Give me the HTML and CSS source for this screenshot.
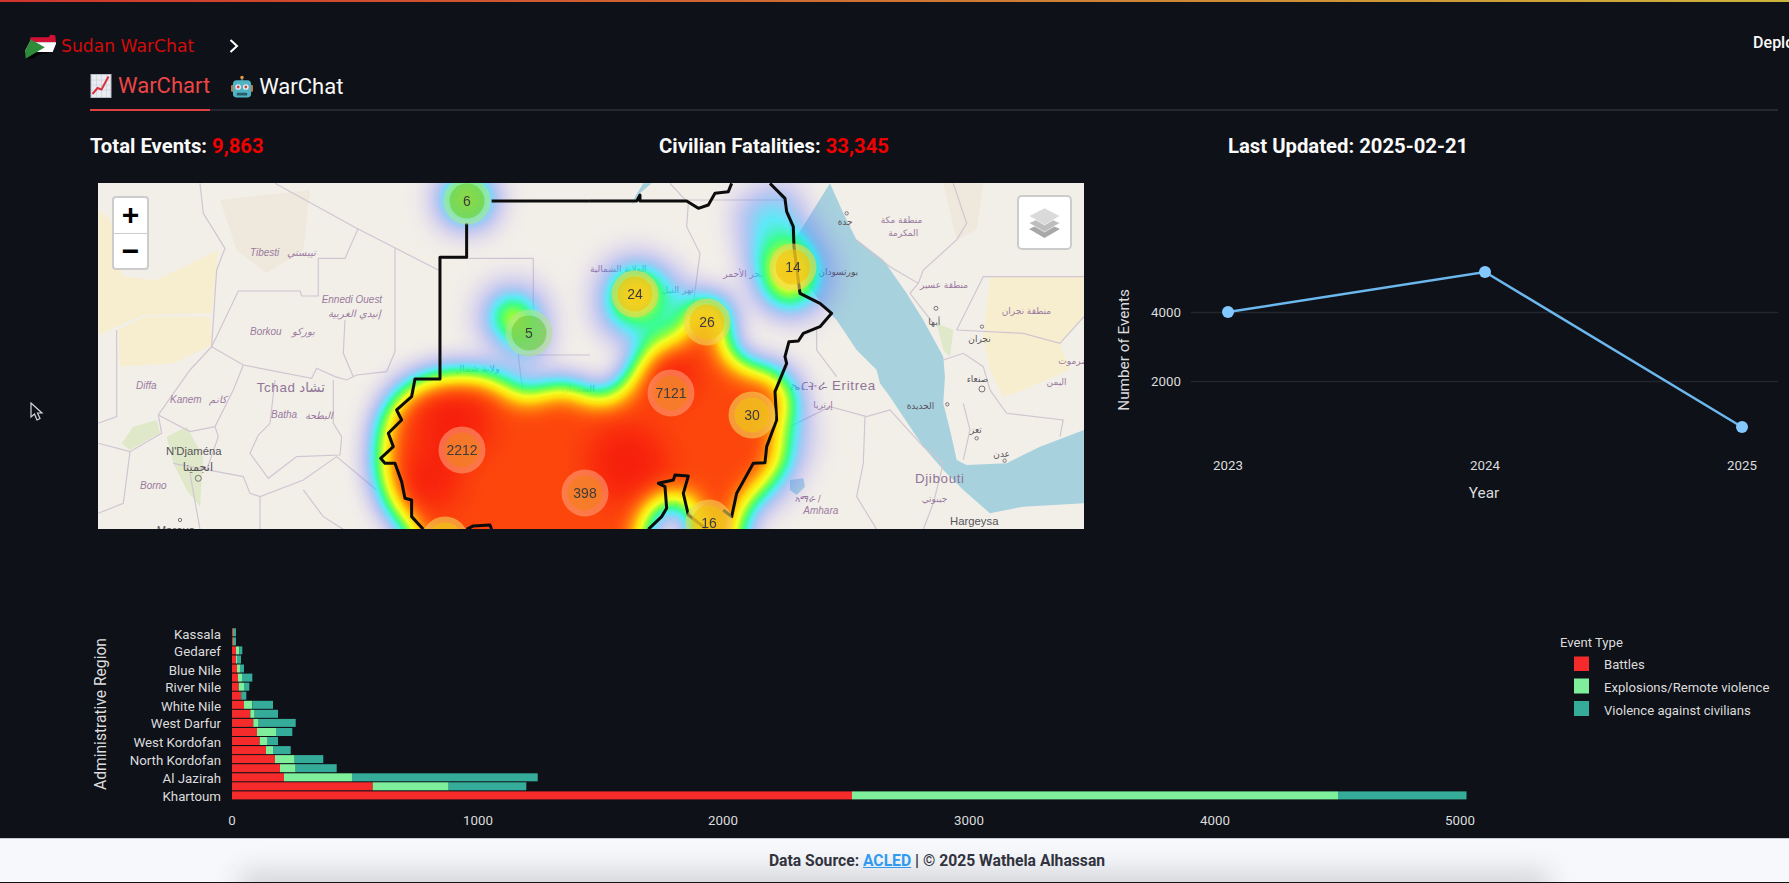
FILE: index.html
```html
<!DOCTYPE html>
<html lang="en">
<head>
    <meta charset="UTF-8">
    <title>Sudan WarChat</title>
    <link rel="stylesheet" href="styles.css">
</head>
<body>
    <div class="top-line"></div>

    <header class="header">
        <svg class="flag" viewBox="25 18 100 80">
            <clipPath id="sudan"><path d="M45 30 100 30 105 22 120 25 122 50 112 75 100 78 70 82 50 95 30 95 28 72 42 45Z"/></clipPath>
            <g clip-path="url(#sudan)">
                <rect x="25" y="18" width="100" height="27" fill="#d21034"/>
                <rect x="25" y="45" width="100" height="30" fill="#fff"/>
                <rect x="25" y="75" width="100" height="23" fill="#000"/>
                <path d="M25 25 88 60 25 98Z" fill="#2e8b3a"/>
            </g>
        </svg>
        <span class="brand">Sudan WarChat</span>
        <svg class="chevron" viewBox="0 0 12 16"><path d="M2.500 2 9 8 2.500 14" fill="none" stroke="#fff" stroke-width="2"/></svg>
        <span class="deploy">Deploy</span>
    </header>

    <main class="main">
        <nav class="tabs">
            <a class="tab active">
                <svg class="tab-icon" viewBox="0 0 21 24">
                    <rect x=".5" y=".5" width="20" height="23" fill="#e9ebf0" stroke="#b9bcc6"/>
                    <path d="M1 6H20M1 11H20M1 16H20M6 1V23M11 1V23M16 1V23" stroke="#c9ccd6" stroke-width=".6"/>
                    <path d="M2 20 7 14 11 15.500 18 2.500" fill="none" stroke="#d8343f" stroke-width="2"/>
                </svg>
                WarChart
            </a>
            <a class="tab">
                <svg class="tab-icon" viewBox="0 0 23 24">
                    <circle cx="11.500" cy="2" r="1.800" fill="#f09a3a"/>
                    <rect x="10.800" y="3" width="1.400" height="3" fill="#7a8a90"/>
                    <rect x="0" y="10" width="3" height="7" rx="1" fill="#c8743a"/>
                    <rect x="20" y="10" width="3" height="7" rx="1" fill="#c8743a"/>
                    <rect x="2" y="5" width="19" height="18" rx="4" fill="#4fb3c4"/>
                    <circle cx="7.500" cy="12" r="3" fill="#dfeef2"/>
                    <circle cx="15.500" cy="12" r="3" fill="#dfeef2"/>
                    <circle cx="7.500" cy="12" r="1.500" fill="#d8443f"/>
                    <circle cx="15.500" cy="12" r="1.500" fill="#d8443f"/>
                    <rect x="6" y="18" width="11" height="3" rx="1" fill="#2b5a68"/>
                </svg>
                WarChat
            </a>
        </nav>

        <section class="stats">
            <div class="stat">Total Events: <span class="stat-red">9,863</span></div>
            <div class="stat">Civilian Fatalities: <span class="stat-red">33,345</span></div>
            <div class="stat">Last Updated: 2025-02-21</div>
        </section>

        <section class="charts">
            <div class="map">
                <svg class="map-svg" viewBox="0 0 986 346">
                    <defs>
                        <filter id="heat" filterUnits="userSpaceOnUse" x="-60" y="-60" width="1110" height="520" color-interpolation-filters="sRGB">
                            <feGaussianBlur stdDeviation="15"/>
                            <feColorMatrix values="0 0 0 1 0  0 0 0 1 0  0 0 0 1 0  0 0 0 1 0"/>
                            <feComponentTransfer>
                                <feFuncR type="table" tableValues=".4 .4 .3 .05 .1 .5 .95 1 1 1 .97"/>
                                <feFuncG type="table" tableValues=".3 .42 .6 .9 1 1 1 .85 .55 .28 .08"/>
                                <feFuncB type="table" tableValues="1 1 1 1 .5 .2 .1 0 0 0 0"/>
                                <feFuncA type="table" tableValues="0 .22 .45 .65 .85 .93 .95 .95 .95 .95 .95"/>
                            </feComponentTransfer>
                        </filter>
                    </defs>

                    <rect width="986" height="346" fill="#f2efe9"/>

                    <!-- left part, traced in 3x crop units -->
                    <g transform="translate(-8 -13) scale(.3333)">
                        <path class="sand" d="M25 120 60 150 100 320 200 330 385 240 365 430 160 435 25 495Z"/>
                        <path class="sand" d="M85 480 160 440 362 440 365 525 250 580 90 590Z"/>
                        <path class="sand-soft" d="M390 90 660 60 640 240 530 310 440 240Z"/>
                        <path class="grass" d="M230 800 290 770 340 860 330 1010 290 960 250 880Z"/>
                        <path class="grass" d="M95 820 130 770 200 750 210 790 120 840Z"/>
                        <g class="bound">
                            <path d="M330 40 340 130 405 235 380 300 365 530 300 600 205 735 215 790 120 845 25 820"/>
                            <path d="M555 40 800 175 1045 300"/>
                            <path d="M805 175 765 265 685 265 685 378 635 378 630 363 445 363 365 530"/>
                            <path d="M915 235 915 545 890 605 800 615 770 630 735 620 680 595 665 625 460 585 365 530"/>
                            <path d="M765 450 760 550 790 620"/>
                            <path d="M460 585 430 660 375 770 385 800 350 900"/>
                            <path d="M730 630 730 760 755 800 750 855 620 860 535 925 480 850 505 795 540 760 555 630"/>
                            <path d="M205 735 300 785 375 770"/>
                            <path d="M80 480 80 740 25 760"/>
                            <path d="M120 845 100 1000 25 1030"/>
                            <path d="M300 910 330 1078"/>
                            <path d="M510 1078 510 980 640 930 740 860 860 960"/>
                            <path d="M250 880 460 920 480 970 510 980"/>
                            <path d="M640 960 700 1040 760 1078"/>
                            <path d="M1045 265H1330V420"/>
                            <path d="M1285 555 1300 680"/>
                            <path d="M1285 555H1500"/>
                        </g>
                        <g class="place">
                            <text x="480" y="257">Tibesti</text><text x="590" y="259">تيبستي</text>
                            <text x="695" y="398">Ennedi Ouest</text><text x="715" y="440">إنيدي الغربية</text>
                            <text x="480" y="494">Borkou</text><text x="605" y="496">بوركو</text>
                            <text x="138" y="656">Diffa</text>
                            <text x="240" y="698">Kanem</text><text x="358" y="700">كانم</text>
                            <text x="543" y="745">Batha</text><text x="645" y="746">البطحة</text>
                            <text x="150" y="956">Borno</text>
                        </g>
                        <text class="country" x="500" y="667">Tchad</text>
                        <text class="country" x="628" y="667">تشاد</text>
                        <text class="city" x="228" y="855">N'Djaména</text>
                        <text class="city" x="278" y="903">انجمينا</text>
                        <text class="city" x="200" y="1092">Maroua</text>
                        <circle class="city-dot" cx="325" cy="925" r="9"/>
                        <circle class="city-dot" cx="270" cy="1050" r="5"/>
                        <text class="place-up" x="1095" y="605">ولاية شمال</text>
                    </g>

                    <!-- right part, traced in 3x crop units -->
                    <g transform="translate(492 -13) scale(.3333)">
                        <path class="sand" d="M1200 320H1482V440L1410 520 1440 600 1300 660 1240 680 1200 600 1180 500Z"/>
                        <path class="sand-soft" d="M1060 40H1180L1160 180 1100 210Z"/>
                        <path class="grass" d="M1040 460 1090 480 1080 560 1060 540Z"/>
                        <path class="water" d="M545 40 600 130 620 200 720 40ZM720 40 760 130 800 210 880 270 950 370 1000 450 1060 560 1065 620 1060 700 1085 800 1100 870 1130 885 1250 880 1350 830 1482 780V1000L1300 1010 1200 1030 1120 960 1060 900 1000 830 900 680 870 640 860 600 800 540 740 450 720 430 680 380 620 300 600 180 590 100 545 40Z"/>
                        <path class="water" d="M600 930 640 925 645 950 620 975 600 960Z"/>
                        <path class="water" d="M160 40 185 40 150 70 125 105 135 80Z"/>
                        <g class="bound">
                            <path d="M0 90H580"/>
                            <path d="M240 40 295 100 290 170 330 250 310 400 250 470"/>
                            <path d="M680 480 680 540 740 620"/>
                            <path d="M600 770 720 710 830 740 900 720 1000 830 1060 880"/>
                            <path d="M825 740 820 880 800 980 860 1078"/>
                            <path d="M800 210 900 290 985 340 960 370 1030 460"/>
                            <path d="M1100 480 1180 320H1482"/>
                            <path d="M1100 480 1300 490 1410 520 1482 440"/>
                            <path d="M1060 570 1120 550 1180 590 1200 660 1250 730 1420 750 1410 800"/>
                            <path d="M1120 700 1140 780 1120 870"/>
                            <path d="M1000 1078 1030 1000 1060 880"/>
                            <path d="M1090 40 1130 160 1100 210 1000 300 985 340"/>
                        </g>
                        <g class="place-ar">
                            <text x="872" y="158">منطقة مكة</text>
                            <text x="895" y="198">المكرمة</text>
                            <text x="400" y="320">بحر الأحمر</text>
                            <text x="0" y="305">الولاية الشمالية</text>
                            <text x="215" y="370">نهر النيل</text>
                            <text x="990" y="355">منطقة عسير</text>
                            <text x="1235" y="433">منطقة نجران</text>
                            <text x="1405" y="582">حضرموت</text>
                            <text x="1370" y="645">اليمن</text>
                            <text x="670" y="715">إرتريا</text>
                            <text x="615" y="995">አማራ /</text>
                        </g>
                        <text class="place" x="640" y="1033">Amhara</text>
                        <text class="country" x="600" y="660">ኤርትራ Eritrea</text>
                        <text class="country" x="975" y="940">Djibouti</text>
                        <text class="place-ar" x="995" y="997">جيبوتي</text>
                        <text class="city" x="1080" y="1066">Hargeysa</text>
                        <g class="city-sm">
                            <text x="743" y="166">جدة</text>
                            <text x="685" y="315">بورتسودان</text>
                            <text x="1015" y="466">أبها</text>
                            <text x="1135" y="516">نجران</text>
                            <text x="1130" y="637">صنعاء</text>
                            <text x="950" y="718">الحديدة</text>
                            <text x="1140" y="790">تعز</text>
                            <text x="1210" y="860">عدن</text>
                        </g>
                        <circle class="city-dot" cx="770" cy="130" r="5"/>
                        <circle class="city-dot" cx="1038" cy="415" r="6"/>
                        <circle class="city-dot" cx="1176" cy="470" r="5"/>
                        <circle class="city-dot" cx="1176" cy="657" r="9"/>
                        <circle class="city-dot" cx="1072" cy="703" r="5"/>
                        <circle class="city-dot" cx="1160" cy="805" r="5"/>
                        <circle class="city-dot" cx="1244" cy="872" r="5"/>
                        <text class="place-up" x="-85" y="665">السودان</text>
                    </g>

                    <!-- heat layer: alpha is turned into colour by the filter -->
                    <g filter="url(#heat)">
                        <path opacity=".92" d="M282 244 292 220 312 200 342 190 385 189 409 200 425 214 449 204 472 200 490 212 512 214 525 203 542 174 559 160 589 150 590 132 600 116 620 116 632 135 628 146 629 167 649 184 679 187 692 204 692 227 682 254 687 274 669 300 649 320 642 346 640 420 600 420 598 345 590 318 560 318 546 345 545 420 330 420 312 346 292 327 279 287Z"/>
                        <circle cx="355" cy="240" r="38"/>
                        <circle cx="332" cy="297" r="30"/>
                        <circle cx="572" cy="190" r="26"/>
                        <circle cx="529" cy="280" r="40"/>
                        <circle cx="415" cy="134" r="14"/>
                        <circle cx="431" cy="150" r="8" opacity=".6"/>
                        <circle cx="537" cy="111" r="16"/>
                        <circle cx="694" cy="90" r="17"/>
                        <circle cx="369" cy="16" r="15"/>
                        <circle cx="415" cy="134" r="36" opacity=".2"/>
                        <circle cx="537" cy="111" r="40" opacity=".22"/>
                        <circle cx="694" cy="90" r="40" opacity=".25"/>
                        <circle cx="369" cy="16" r="32" opacity=".25"/>
                        <path d="M640 20 690 0 715 60 680 110 650 80Z" opacity=".3"/>
                        <path d="M655 105 700 100 718 130 680 130Z" opacity=".3"/>
                        <path d="M410 150 450 150 440 190 410 190Z" opacity=".2"/>
                        <path d="M525 90 560 85 600 110 590 150 540 170 500 140Z" opacity=".22"/>
                        <path d="M700 190 715 260 690 310 650 340Z" opacity=".2"/>
                    </g>

                    <g transform="translate(-8 -13) scale(.3333)" class="sudan-line">
                        <path d="M1500 93H1205"/>
                        <path d="M1130 160V262H1050V627H975L965 680 920 720 935 750 895 790 910 830 872 865 885 880 915 880 935 935 945 985 965 990 965 1040 1000 1078"/>
                        <path d="M1130 1078 1150 1068 1200 1065 1205 1078"/>
                    </g>
                    <g transform="translate(492 -13) scale(.3333)" class="sudan-line">
                        <path d="M0 93H140L150 75 150 93H290L325 115 355 105 375 70 415 65 425 40"/>
                        <path d="M540 40 585 85 590 125 610 170 612 230 630 370 690 400 725 430 690 470 640 490 625 513 597 515 585 560 590 580 555 665 560 750 530 830 525 878 490 880 440 970 425 1040 400 1020"/>
                        <path d="M175 1078 215 1040 230 1015 225 950 205 940 250 930 255 915 295 918 280 970 295 1035 350 1078"/>
                    </g>

                    <!-- clusters -->
                    <g class="cluster small"><circle cx="369" cy="18" r="23.500"/><circle cx="369" cy="18" r="17.500"/><text x="369" y="23">6</text></g>
                    <g class="cluster small"><circle cx="431" cy="150" r="23.500"/><circle cx="431" cy="150" r="17.500"/><text x="431" y="155">5</text></g>
                    <g class="cluster medium"><circle cx="537" cy="111" r="23.500"/><circle cx="537" cy="111" r="17.500"/><text x="537" y="116">24</text></g>
                    <g class="cluster medium"><circle cx="695" cy="84" r="23.500"/><circle cx="695" cy="84" r="17.500"/><text x="695" y="89">14</text></g>
                    <g class="cluster medium"><circle cx="609" cy="139" r="23.500"/><circle cx="609" cy="139" r="17.500"/><text x="609" y="144">26</text></g>
                    <g class="cluster medium"><circle cx="654" cy="232" r="23.500"/><circle cx="654" cy="232" r="17.500"/><text x="654" y="237">30</text></g>
                    <g class="cluster medium"><circle cx="611" cy="340" r="23.500"/><circle cx="611" cy="340" r="17.500"/><text x="611" y="345">16</text></g>
                    <g class="cluster medium"><circle cx="347" cy="357" r="23.500"/><circle cx="347" cy="357" r="17.500"/></g>
                    <g class="cluster large"><circle cx="364" cy="267" r="23.500"/><circle cx="364" cy="267" r="17.500"/><text x="364" y="272">2212</text></g>
                    <g class="cluster large"><circle cx="487" cy="310" r="23.500"/><circle cx="487" cy="310" r="17.500"/><text x="487" y="315">398</text></g>
                    <g class="cluster large"><circle cx="573" cy="210" r="23.500"/><circle cx="573" cy="210" r="17.500"/><text x="573" y="215">7121</text></g>
                </svg>

                <div class="zoom-bar">
                    <div class="zoom-btn">+</div>
                    <div class="zoom-btn">−</div>
                </div>
                <div class="layers-btn">
                    <svg class="layers-icon" viewBox="0 0 31 30">
                        <path d="M15.500 14 31 21 15.500 30 0 21Z" fill="#a8a8a8"/>
                        <path d="M15.500 8 31 15 15.500 24 0 15Z" fill="#bdbdbd" stroke="#fff" stroke-width=".6"/>
                        <path d="M15.500 0 31 8 15.500 17 0 8Z" fill="#dadada" stroke="#fff" stroke-width=".6"/>
                    </svg>
                </div>
            </div>

            <svg class="line-chart" viewBox="1100 183 689 346">
                <path class="grid" d="M1191 312.500H1778M1191 381.500H1778"/>
                <text class="tick end" x="1181" y="317">4000</text>
                <text class="tick end" x="1181" y="386">2000</text>
                <text class="axis-title" transform="translate(1129 350) rotate(-90)">Number of Events</text>
                <polyline class="trend" points="1228,312 1485,272 1742,427"/>
                <circle class="dot" cx="1228" cy="312" r="6"/>
                <circle class="dot" cx="1485" cy="272" r="6"/>
                <circle class="dot" cx="1742" cy="427" r="6"/>
                <text class="tick mid" x="1228" y="470">2023</text>
                <text class="tick mid" x="1485" y="470">2024</text>
                <text class="tick mid" x="1742" y="470">2025</text>
                <text class="axis-title" x="1484" y="498">Year</text>
            </svg>
        </section>

        <svg class="bar-chart" viewBox="90 620 1699 218">
            <text class="axis-title region-title" transform="translate(106 714) rotate(-90)">Administrative Region</text>
            <g class="tick end">
                <text x="221" y="639">Kassala</text>
                <text x="221" y="656">Gedaref</text>
                <text x="221" y="675">Blue Nile</text>
                <text x="221" y="692">River Nile</text>
                <text x="221" y="711">White Nile</text>
                <text x="221" y="728">West Darfur</text>
                <text x="221" y="747">West Kordofan</text>
                <text x="221" y="765">North Kordofan</text>
                <text x="221" y="783">Al Jazirah</text>
                <text x="221" y="801">Khartoum</text>
            </g>
            <g class="bars-red">
                <rect x="232" y="628.300" width="1" height="8"/>
                <rect x="232" y="637.400" width="1" height="8"/>
                <rect x="232" y="646.400" width="4" height="8"/>
                <rect x="232" y="655.500" width="4" height="8"/>
                <rect x="232" y="664.500" width="5" height="8"/>
                <rect x="232" y="673.600" width="6" height="8"/>
                <rect x="232" y="682.700" width="6.700" height="8"/>
                <rect x="232" y="691.700" width="9" height="8"/>
                <rect x="232" y="700.800" width="12" height="8"/>
                <rect x="232" y="709.800" width="18.300" height="8"/>
                <rect x="232" y="718.900" width="21.300" height="8"/>
                <rect x="232" y="728" width="25" height="8"/>
                <rect x="232" y="737" width="27.700" height="8"/>
                <rect x="232" y="746.100" width="34" height="8"/>
                <rect x="232" y="755.100" width="43" height="8"/>
                <rect x="232" y="764.200" width="48" height="8"/>
                <rect x="232" y="773.300" width="52" height="8"/>
                <rect x="232" y="782.300" width="140.700" height="8"/>
                <rect x="232" y="791.400" width="620" height="8"/>
            </g>
            <g class="bars-green">
                <rect x="233" y="628.300" width=".7" height="8"/>
                <rect x="233" y="637.400" width=".7" height="8"/>
                <rect x="236" y="646.400" width="3.300" height="8"/>
                <rect x="236" y="655.500" width="1" height="8"/>
                <rect x="237" y="664.500" width="3" height="8"/>
                <rect x="238" y="673.600" width="4" height="8"/>
                <rect x="238.700" y="682.700" width="5.300" height="8"/>
                <rect x="241" y="691.700" width=".3" height="8"/>
                <rect x="244" y="700.800" width="8.300" height="8"/>
                <rect x="250.300" y="709.800" width="4.400" height="8"/>
                <rect x="253.300" y="718.900" width="5.400" height="8"/>
                <rect x="257" y="728" width="19" height="8"/>
                <rect x="259.700" y="737" width="8" height="8"/>
                <rect x="266" y="746.100" width="7" height="8"/>
                <rect x="275" y="755.100" width="19.700" height="8"/>
                <rect x="280" y="764.200" width="15.700" height="8"/>
                <rect x="284" y="773.300" width="68" height="8"/>
                <rect x="372.700" y="782.300" width="76" height="8"/>
                <rect x="852" y="791.400" width="486" height="8"/>
            </g>
            <g class="bars-teal">
                <rect x="233.700" y="628.300" width="2.300" height="8"/>
                <rect x="233.700" y="637.400" width="2.300" height="8"/>
                <rect x="239.300" y="646.400" width="3" height="8"/>
                <rect x="237" y="655.500" width="4" height="8"/>
                <rect x="240" y="664.500" width="4" height="8"/>
                <rect x="242" y="673.600" width="10.300" height="8"/>
                <rect x="244" y="682.700" width="5.300" height="8"/>
                <rect x="241.300" y="691.700" width="5" height="8"/>
                <rect x="252.300" y="700.800" width="20.700" height="8"/>
                <rect x="254.700" y="709.800" width="23.300" height="8"/>
                <rect x="258.700" y="718.900" width="37" height="8"/>
                <rect x="276" y="728" width="16.300" height="8"/>
                <rect x="267.700" y="737" width="10.300" height="8"/>
                <rect x="273" y="746.100" width="17.700" height="8"/>
                <rect x="294.700" y="755.100" width="28.600" height="8"/>
                <rect x="295.700" y="764.200" width="41" height="8"/>
                <rect x="352" y="773.300" width="185.700" height="8"/>
                <rect x="448.700" y="782.300" width="77.600" height="8"/>
                <rect x="1338" y="791.400" width="128.500" height="8"/>
            </g>
            <g class="tick mid">
                <text x="232" y="825">0</text>
                <text x="478" y="825">1000</text>
                <text x="723" y="825">2000</text>
                <text x="969" y="825">3000</text>
                <text x="1215" y="825">4000</text>
                <text x="1460" y="825">5000</text>
            </g>
            <text class="legend-title" x="1560" y="647">Event Type</text>
            <rect class="bars-red" x="1574" y="656.500" width="15" height="14.500"/>
            <rect class="bars-green" x="1574" y="678.500" width="15" height="15"/>
            <rect class="bars-teal" x="1574" y="701" width="15" height="15"/>
            <text class="legend-label" x="1604" y="669">Battles</text>
            <text class="legend-label" x="1604" y="692">Explosions/Remote violence</text>
            <text class="legend-label" x="1604" y="715">Violence against civilians</text>
        </svg>
    </main>

    <footer class="footer">
        <span class="footer-text">Data Source: <a class="footer-link">ACLED</a> | © 2025 Wathela Alhassan</span>
    </footer>

    <svg class="cursor" viewBox="0 0 14 19">
        <path d="M1 1V15L4.500 12 7 18 10 16.500 7.500 11H12Z" fill="#0e1117" stroke="#d8d8d8" stroke-width="1.200"/>
    </svg>
</body>
</html>
```

FILE: styles.css
```css
:root {
    --bg: #0e1117;
    --red: #f52a2a;
    --green: #7fef9c;
    --teal: #35ab99;
}

html, body {
    margin: 0;
    height: 100%;
}

body {
    background-color: var(--bg);
    color: #fafafa;
    font-family: Roboto, "Noto Sans", sans-serif;
    display: flex;
    flex-direction: column;
    overflow: hidden;
    position: relative;
}

.top-line {
    height: 2px;
    flex: none;
    background: linear-gradient(90deg, #d0342c, #cdb43a);
}

.header {
    height: 70px;
    flex: none;
    display: flex;
    align-items: center;
    padding: 18px 0 0 24px;
    box-sizing: border-box;
}

.flag {
    width: 33px;
    height: 27px;
    flex: none;
}

.brand {
    margin-left: 4px;
    width: 167px;
    font-family: "DejaVu Sans", sans-serif;
    font-size: 17.200px;
    color: #d40b0b;
    white-space: nowrap;
}

.chevron {
    width: 12px;
    height: 16px;
    flex: none;
}

.deploy {
    margin-left: auto;
    margin-right: -13px;
    font-size: 16px;
    font-weight: 500;
    padding-bottom: 8px;
}

.main {
    flex: 1;
    padding-left: 90px;
    min-height: 0;
}

.tabs {
    display: flex;
    gap: 21px;
    height: 39px;
    margin-right: 11px;
    box-sizing: border-box;
    border-bottom: 2px solid #262730;
}

.tab {
    display: flex;
    align-items: center;
    gap: 6px;
    height: 39px;
    padding-bottom: 10px;
    box-sizing: border-box;
    font-size: 22px;
    color: #fafafa;
}

.tab.active {
    color: #ec4646;
    border-bottom: 2px solid #e0403f;
}

.tab-icon {
    width: 22px;
    height: 24px;
    flex: none;
}

.stats {
    display: grid;
    grid-template-columns: repeat(3, 569px);
    margin-top: 22px;
    height: 26px;
    align-items: center;
}

.stat {
    font-size: 20.300px;
    font-weight: 700;
}

.stat-red {
    color: #f00000;
}

.charts {
    display: flex;
    gap: 16px;
    margin-top: 24px;
}

.map {
    position: relative;
    width: 986px;
    height: 346px;
    margin-left: 8px;
    flex: none;
    overflow: hidden;
}

.map-svg {
    display: block;
    width: 986px;
    height: 346px;
}

.sand { fill: #f7eed0; }
.sand-soft { fill: #efe8dc; }
.grass { fill: #dfe8c8; }
.water { fill: #a8d1de; }

.bound {
    fill: none;
    stroke: #d0c5d1;
    stroke-width: 3.500;
}

.place, .place text {
    font-family: "Liberation Sans", "DejaVu Sans", sans-serif;
    font-style: italic;
    font-size: 30px;
    fill: #9a7a9e;
}

.place-ar, .place-ar text {
    font-family: "DejaVu Sans", sans-serif;
    font-size: 27px;
    fill: #9a7a9e;
}

.place-up {
    font-family: "DejaVu Sans", sans-serif;
    font-size: 29px;
    fill: #7c6fa8;
}

.country {
    font-family: "Liberation Sans", "DejaVu Sans", sans-serif;
    font-size: 40px;
    letter-spacing: 2px;
    fill: #8f7596;
}

.city, .city-sm text {
    font-family: "Liberation Sans", "DejaVu Sans", sans-serif;
    font-size: 34px;
    fill: #57545a;
}

.city-sm text {
    font-family: "DejaVu Sans", sans-serif;
    font-size: 27px;
}

.city-dot {
    fill: none;
    stroke: #77727a;
    stroke-width: 3;
}

.sudan-line path {
    fill: none;
    stroke: #0c0c0c;
    stroke-width: 9;
    stroke-linejoin: round;
}

.cluster text {
    font-family: "Liberation Sans", sans-serif;
    font-size: 14px;
    text-anchor: middle;
    fill: #3c3c3c;
}

.small circle:nth-child(1) { fill: rgba(181, 226, 140, 0.6); }
.small circle:nth-child(2) { fill: rgba(110, 204, 57, 0.6); }
.medium circle:nth-child(1) { fill: rgba(241, 211, 87, 0.6); }
.medium circle:nth-child(2) { fill: rgba(240, 194, 12, 0.6); }
.large circle:nth-child(1) { fill: rgba(253, 156, 115, 0.6); }
.large circle:nth-child(2) { fill: rgba(241, 128, 23, 0.6); }

.zoom-bar {
    position: absolute;
    left: 14px;
    top: 13px;
    width: 37px;
    background: #fff;
    border: 2px solid rgba(0, 0, 0, 0.2);
    border-radius: 4px;
    box-sizing: border-box;
}

.zoom-btn {
    height: 34.500px;
    text-align: center;
    font: bold 30px/34px "Liberation Sans", sans-serif;
    color: #000;
}

.zoom-btn + .zoom-btn {
    border-top: 1px solid #ccc;
}

.layers-btn {
    position: absolute;
    right: 12px;
    top: 12px;
    width: 55px;
    height: 55px;
    box-sizing: border-box;
    background: #fff;
    border: 2px solid rgba(0, 0, 0, 0.2);
    border-radius: 5px;
    display: flex;
    align-items: center;
    justify-content: center;
}

.layers-icon {
    width: 31px;
    height: 30px;
}

.line-chart {
    display: block;
    width: 689px;
    height: 346px;
    flex: none;
}

.grid {
    stroke: #24262e;
    stroke-width: 1.500;
    fill: none;
}

.trend {
    fill: none;
    stroke: #6cb8ee;
    stroke-width: 2.500;
}

.dot {
    fill: #83c9ff;
}

.tick, .tick text {
    font-size: 13.300px;
    fill: #dcdcde;
}

.end, .end text { text-anchor: end; }
.mid, .mid text { text-anchor: middle; }

.axis-title {
    font-size: 15.300px;
    fill: #dcdcde;
    text-anchor: middle;
}

.region-title {
    font-size: 15.600px;
}

.bar-chart {
    display: block;
    width: 1699px;
    height: 218px;
    margin-top: 91px;
}

.bars-red { fill: var(--red); }
.bars-green { fill: var(--green); }
.bars-teal { fill: var(--teal); }

.legend-title, .legend-label {
    font-size: 13.100px;
    fill: #dcdcde;
}

.footer {
    position: relative;
    height: 45px;
    flex: none;
    background-color: #f6f8fb;
    border-top: 1px solid #c9ccd2;
    border-bottom: 1px solid #111;
    box-sizing: border-box;
    display: flex;
    align-items: center;
    justify-content: center;
    padding-left: 85px;
    overflow: hidden;
}

.footer::before {
    content: "";
    position: absolute;
    left: 240px;
    right: 240px;
    bottom: -16px;
    height: 26px;
    background: #cfd1d4;
    filter: blur(13px);
}

.footer-text {
    position: relative;
    font-size: 15.700px;
    font-weight: 700;
    color: #31333f;
}

.footer-link {
    color: #2f9bf0;
    text-decoration: underline;
}

.cursor {
    position: absolute;
    left: 30px;
    top: 402px;
    width: 14px;
    height: 19px;
}
```
